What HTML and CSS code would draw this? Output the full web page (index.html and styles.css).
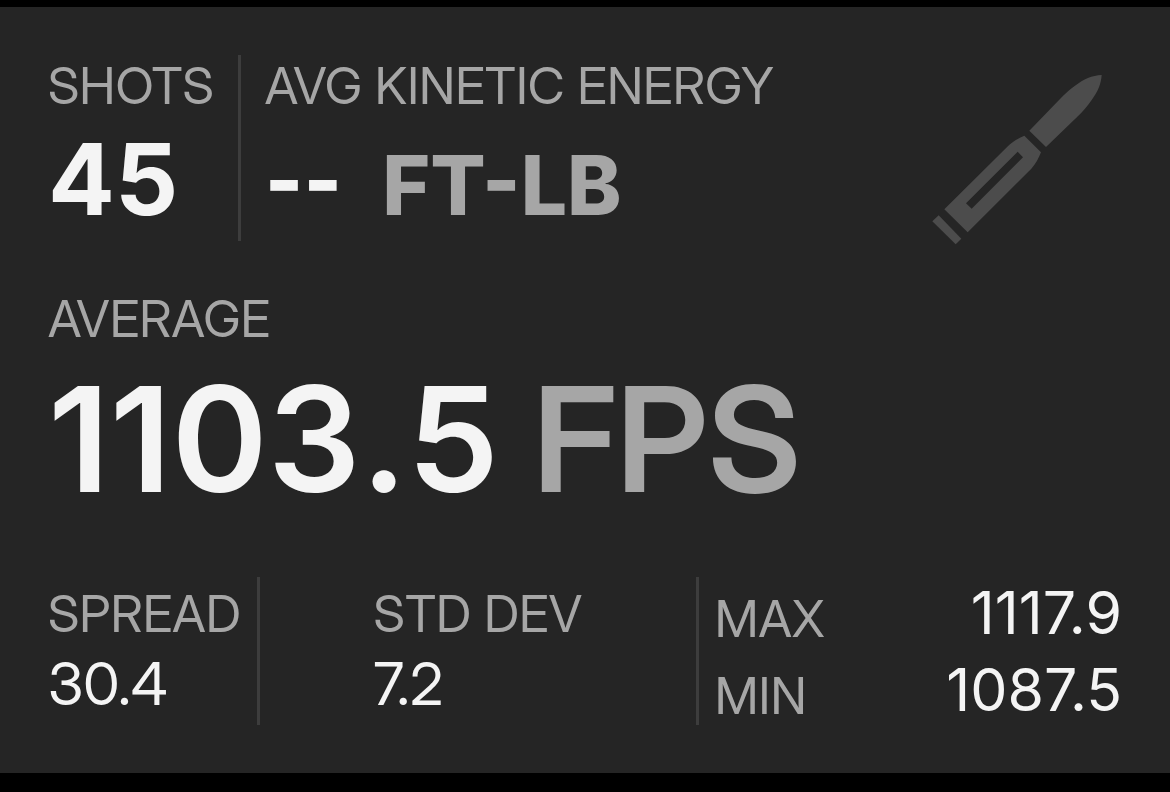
FILE: index.html
```html
<!DOCTYPE html>
<html lang="en">
  <head>
    <meta charset="UTF-8" />
    <meta name="viewport" content="width=device-width, initial-scale=1.0" />
    <title>Shot Summary</title>
    <link rel="stylesheet" href="styles.css">
  </head>
  <body>
    <main class="card">
      <section class="top">
        <div class="top-stats">
          <div class="stat-row">
            <div class="stat">
              <div class="label">SHOTS</div>
              <div class="value-large">45</div>
            </div>
            <div class="stat">
              <div class="label">AVG KINETIC ENERGY</div>
              <div class="value-large energy"><span>--</span><span class="unit">FT-LB</span></div>
            </div>
          </div>
          <div class="average">
            <div class="label">AVERAGE</div>
            <div class="value-hero"><span class="number">1103.5</span><span class="unit">FPS</span></div>
          </div>
        </div>

        <svg class="cartridge" viewBox="12 -15 624 624" aria-hidden="true">
          <path d="M358 212 L408 261 L502 170 C518 155 531 140 545 120 C564 94 573 73 575 45 C546 46 521 58 495 77 C481 87 470 97 458 109 Z" />
          <path fill-rule="evenodd" d="M343 227 L393 277 C385 296 378 311 364 326 L173 517 L103 448 L292 260 C306 246 322 236 343 227 Z M323 275 L168 430 L185 446 L339 292 Z" />
          <path d="M86 466 L154 536 L137 553 L67 484 Z" />
        </svg>
      </section>

      <section class="bottom">
        <div class="cell">
          <div class="label">SPREAD</div>
          <div class="value">30.4</div>
        </div>
        <div class="cell cell-center">
          <div class="cell-block">
            <div class="label">STD DEV</div>
            <div class="value">7.2</div>
          </div>
        </div>
        <div class="cell range">
          <div class="range-row">
            <span class="label">MAX</span>
            <span class="value">1117.9</span>
          </div>
          <div class="range-row">
            <span class="label">MIN</span>
            <span class="value">1087.5</span>
          </div>
        </div>
      </section>
    </main>
  </body>
</html>
```
FILE: styles.css
```css
* {
  box-sizing: border-box;
}

body {
  margin: 0;
  padding: 7px 0 19px;
  background-color: #000;
  color: #f4f4f4;
  font-family: "Inter Display", Inter, sans-serif;
}

.card {
  display: flex;
  flex-direction: column;
  gap: 48px;
  padding: 48px;
  background-color: #252525;
}

.label {
  font-size: 51px;
  line-height: 62px;
  color: #a6a6a6;
  white-space: nowrap;
}

.unit {
  color: #a6a6a6;
}

/* Top: shots, energy, average */
.top {
  display: flex;
  justify-content: space-between;
  align-items: flex-start;
}

.top-stats {
  display: flex;
  flex-direction: column;
  gap: 47px;
}

.stat-row {
  display: flex;
}

.stat + .stat {
  margin-left: 24px;
  padding-left: 24px;
  border-left: 3px solid #3d3d3d;
}

.value-large {
  font-family: Inter, sans-serif;
  font-size: 99px;
  line-height: 124px;
  font-weight: 700;
  white-space: nowrap;
}

.energy {
  display: flex;
  gap: 40px;
  height: 124px;
  font-size: 82px;
  line-height: 138px;
  font-weight: 800;
  font-feature-settings: "case";
}

.value-hero {
  display: flex;
  gap: 34px;
  font-size: 146px;
  line-height: 179px;
  font-weight: 600;
}

.number {
  font-family: Inter, sans-serif;
  font-kerning: none;
}

.cartridge {
  flex: none;
  width: 208px;
  height: 208px;
  fill: #4c4c4c;
}

/* Bottom: spread, deviation, range */
.bottom {
  display: grid;
  grid-template-columns: auto 1.03fr 1fr;
}

.cell {
  display: flex;
  flex-direction: column;
  justify-content: center;
  gap: 3px;
  padding-right: 16px;
}

.cell + .cell {
  border-left: 3px solid #3d3d3d;
}

.cell-center {
  align-items: center;
  padding-right: 0;
}

.cell-block {
  display: flex;
  flex-direction: column;
  gap: 3px;
}

.value {
  font-size: 59px;
  line-height: 71px;
}

.range {
  gap: 6px;
  padding: 0 0 0 16px;
}

.range-row {
  display: flex;
  justify-content: space-between;
  align-items: flex-end;
}

.range-row .label {
  line-height: 58px;
}

.range-row .value {
  font-family: Inter, sans-serif;
}
```
